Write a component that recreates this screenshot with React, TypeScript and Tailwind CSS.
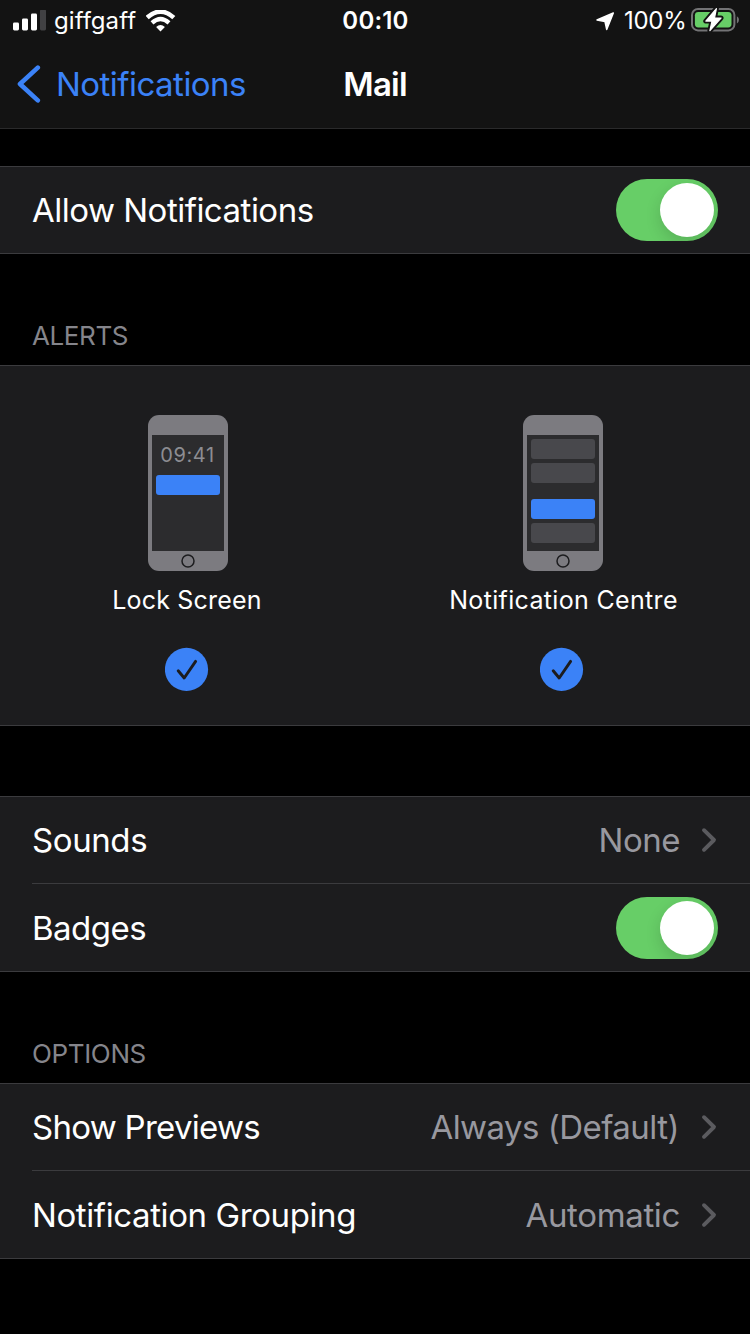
import type { ReactNode } from "react";

function SignalIcon() {
  return (
    <svg className="block h-[22px] w-[34px]" viewBox="0 0 34 22">
      <rect x="0" y="12.5" width="6" height="8" rx="1.4" fill="#fff" />
      <rect x="9" y="8.5" width="6" height="12" rx="1.4" fill="#fff" />
      <rect x="18" y="3.5" width="6" height="17" rx="1.4" fill="#fff" />
      <rect x="27" y="-0.5" width="6" height="21" rx="1.4" fill="#414143" />
    </svg>
  );
}

function WifiIcon() {
  return (
    <svg className="block h-[22px] w-[30px]" viewBox="0 0 30 22" fill="none" stroke="#fff">
      <path d="M1.2 7.6 Q14.5 -4.2 27.8 7.6" strokeWidth="4.6" />
      <path d="M6 12.9 Q14.5 5.1 23 12.9" strokeWidth="4.2" />
      <path d="M10.1 17 Q14.5 13.2 18.9 17 L14.5 21.4 Z" fill="#fff" stroke="none" />
    </svg>
  );
}

function LocationIcon() {
  return (
    <svg className="block h-[20px] w-[20px]" viewBox="0 0 20 20">
      <path
        d="M17.3 1.9 L1 9 L9 10.5 L10.7 18.4 Z"
        fill="#fff"
        stroke="#fff"
        strokeWidth="1.5"
        strokeLinejoin="round"
      />
    </svg>
  );
}

function BatteryIcon() {
  const bolt = "M25.4 0.6 L14.8 13.1 H21 L18.9 22.6 L30 10 H23.5 Z";
  return (
    <svg className="-mt-px block h-[24px] w-[49px]" viewBox="0 0 49 24">
      <rect x="1" y="1" width="42.4" height="21.4" rx="6" fill="none" stroke="#737375" strokeWidth="2" />
      <path d="M45.9 8.2 Q48 9.2 48 11.8 Q48 14.4 45.9 15.4 Z" fill="#737375" />
      <rect x="3.9" y="3.9" width="36.6" height="15.6" rx="3.4" fill="#67ce67" />
      <path d={bolt} fill="#131313" stroke="#131313" strokeWidth="5" strokeLinejoin="round" />
      <path d={bolt} fill="#fff" stroke="#fff" strokeWidth="1.2" strokeLinejoin="round" />
    </svg>
  );
}

function Chevron() {
  return (
    <svg className="mr-px block h-[26px] w-[16px]" viewBox="0 0 16 26">
      <path
        d="M3 3.2 L13 13 L3 22.8"
        fill="none"
        stroke="#5b5b5f"
        strokeWidth="3.9"
        strokeLinecap="round"
        strokeLinejoin="round"
      />
    </svg>
  );
}

function Toggle() {
  return (
    <div className="flex h-[62px] w-[102px] justify-end overflow-hidden rounded-full bg-[#67ce67] p-1">
      <div className="h-[54px] w-[54px] rounded-full bg-white shadow-[0_6px_16px_rgba(0,0,0,0.14)]" />
    </div>
  );
}

function Phone({ children }: { children: ReactNode }) {
  return (
    <div className="flex h-[156px] w-20 flex-col items-center rounded-[11px] bg-[#7c7b80] pt-5">
      <div className="flex h-[116px] w-[72px] flex-col items-center bg-[#2c2c2e] pt-1">{children}</div>
      <svg className="mt-[3px] block h-[14px] w-[14px]" viewBox="0 0 14 14">
        <circle cx="7" cy="7" r="6" fill="none" stroke="#1c1c1e" strokeWidth="1.5" />
      </svg>
    </div>
  );
}

function Check() {
  return (
    <svg className="ml-[-2px] block h-[44px] w-[44px]" viewBox="0 0 44 44">
      <circle cx="21.5" cy="22.4" r="21.6" fill="#3b82f7" />
      <path
        d="M13.2 23.8 L19.2 31 L30.6 14.4"
        fill="none"
        stroke="#1c1c1e"
        strokeWidth="2.9"
        strokeLinecap="round"
        strokeLinejoin="round"
      />
    </svg>
  );
}

function Bar({ className }: { className: string }) {
  return <div className={`h-5 w-16 shrink-0 rounded-[3px] ${className}`} />;
}

export default function App() {
  return (
    <div className="flex h-[1334px] w-[750px] flex-col overflow-hidden bg-black font-['Inter',sans-serif] whitespace-nowrap text-white">
      <header className="h-[129px] shrink-0 border-b border-[#2a2a2b] bg-[#131313]">
        <div className="grid h-[41px] grid-cols-3 items-center">
          <div className="flex items-center pl-[13px]">
            <SignalIcon />
            <span className="ml-[7px] w-[92px] text-[24px] leading-[41px] tracking-[0.05px]">giffgaff</span>
            <WifiIcon />
          </div>
          <span className="pl-px text-center text-[24px] leading-[41px] font-semibold tracking-[0.2px]">00:10</span>
          <div className="flex items-center justify-end pr-[10px]">
            <LocationIcon />
            <span className="ml-2 w-[67px] text-[24px] leading-[41px] tracking-[-0.3px]">100%</span>
            <BatteryIcon />
          </div>
        </div>
        <div className="grid h-[86px] grid-cols-3 items-center">
          <div className="flex items-center pl-[17px]">
            <svg className="block h-[38px] w-6" viewBox="0 0 24 38">
              <path
                d="M20.8 2.6 L3 19 L20.8 35.4"
                fill="none"
                stroke="#3b82f7"
                strokeWidth="4.6"
                strokeLinecap="round"
                strokeLinejoin="round"
              />
            </svg>
            <span className="ml-[15px] text-[33px] leading-[40px] tracking-[-0.53px] text-[#3b82f7]">Notifications</span>
          </div>
          <span className="text-center text-[33px] leading-[40px] font-semibold tracking-[-0.8px]">Mail</span>
        </div>
      </header>

      <section className="mt-[37px] flex h-[88px] shrink-0 items-center justify-between border-y border-[#3b3b3e] bg-[#1c1c1e] px-8">
        <span className="text-[33px] leading-[40px] tracking-[-0.5px]">Allow Notifications</span>
        <Toggle />
      </section>

      <h2 className="mt-[66px] h-[45px] shrink-0 pl-8 text-[26px] leading-[32px] tracking-[-0.4px] text-[#85858b]">ALERTS</h2>
      <section className="grid h-[361px] shrink-0 grid-cols-2 border-y border-[#3b3b3e] bg-[#1c1c1e] pt-[49px]">
        <div className="flex flex-col items-center">
          <Phone>
            <span className="h-9 text-[20px] leading-[32px] tracking-[0.6px] text-[#8d8d92]">09:41</span>
            <Bar className="bg-[#3b82f7]" />
          </Phone>
          <span className="mt-[13px] mr-px mb-[31px] text-[25px] leading-[32px] tracking-[0.2px]">Lock Screen</span>
          <Check />
        </div>
        <div className="flex flex-col items-center">
          <Phone>
            <Bar className="bg-[#48484c]" />
            <Bar className="mt-1 bg-[#48484c]" />
            <Bar className="mt-4 bg-[#3b82f7]" />
            <Bar className="mt-1 bg-[#48484c]" />
          </Phone>
          <span className="mt-[13px] mb-[31px] ml-[2px] text-[25px] leading-[32px] tracking-[0.33px]">Notification Centre</span>
          <Check />
        </div>
      </section>

      <section className="mt-[70px] h-[176px] shrink-0 border-y border-[#3b3b3e] bg-[#1c1c1e] pl-8">
        <div className="flex h-[87px] items-center border-b border-[#3b3b3e] pr-8">
          <span className="text-[33px] leading-[40px] tracking-[-0.4px]">Sounds</span>
          <span className="mr-[21px] ml-auto text-[33px] leading-[40px] tracking-[-0.5px] text-[#98989f]">None</span>
          <Chevron />
        </div>
        <div className="flex h-[87px] items-center justify-between pr-8">
          <span className="text-[33px] leading-[40px] tracking-[-0.5px]">Badges</span>
          <Toggle />
        </div>
      </section>

      <h2 className="mt-[66px] h-[45px] shrink-0 pl-8 text-[26px] leading-[32px] tracking-[-0.35px] text-[#85858b]">OPTIONS</h2>
      <section className="h-[176px] shrink-0 border-y border-[#3b3b3e] bg-[#1c1c1e] pl-8">
        <div className="flex h-[87px] items-center border-b border-[#3b3b3e] pr-8">
          <span className="text-[33px] leading-[40px] tracking-[-0.72px]">Show Previews</span>
          <span className="mr-[22px] ml-auto text-[33px] leading-[40px] tracking-[-0.54px] text-[#98989f]">Always (Default)</span>
          <Chevron />
        </div>
        <div className="flex h-[87px] items-center pr-8">
          <span className="text-[33px] leading-[40px] tracking-[-0.4px]">Notification Grouping</span>
          <span className="mr-[21px] ml-auto text-[33px] leading-[40px] tracking-[-0.35px] text-[#98989f]">Automatic</span>
          <Chevron />
        </div>
      </section>
    </div>
  );
}
